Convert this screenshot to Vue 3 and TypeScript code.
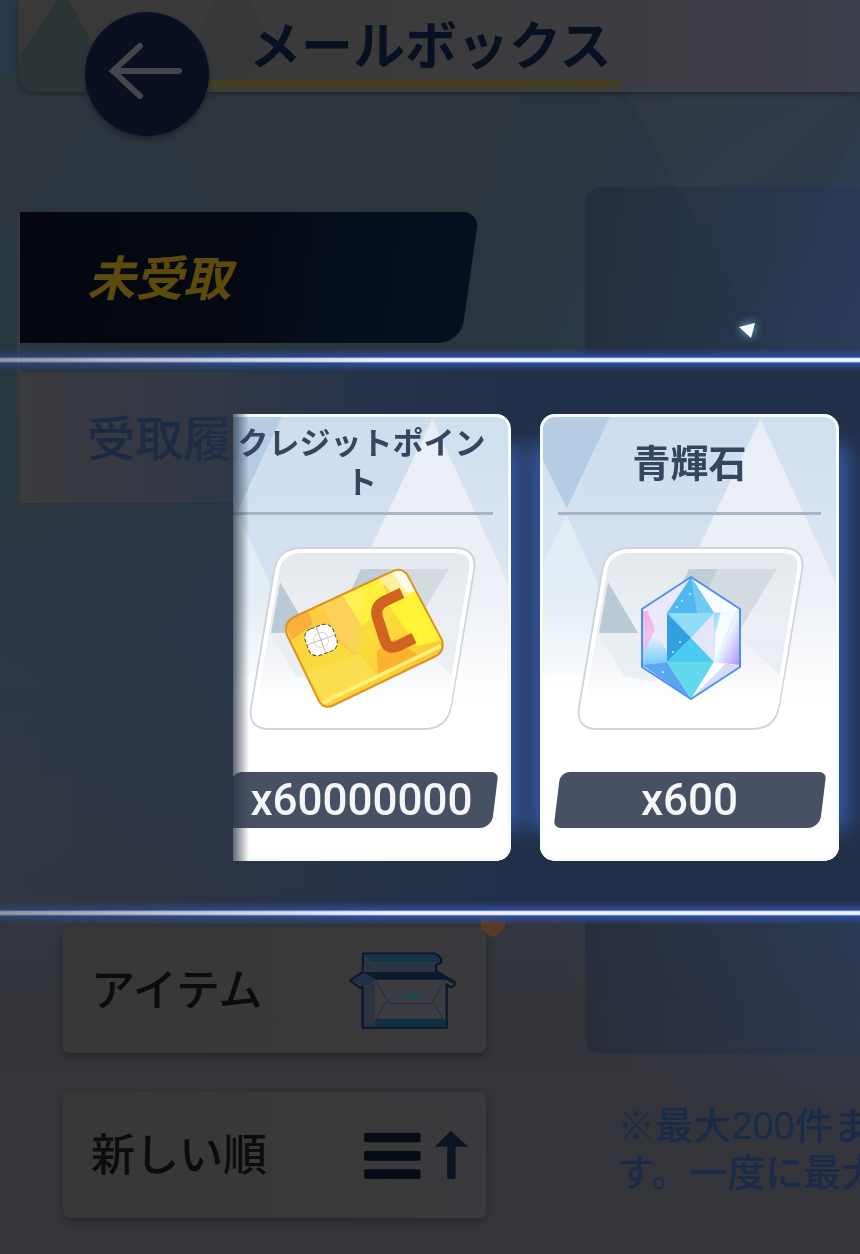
<script setup lang="ts">
import { ref } from 'vue'

interface Reward {
  name: string
  amount: number
  art: 'card' | 'gem'
  long: boolean
}

const tabs = ['未受取', '受取履歴']
const activeTab = ref(0)
const rewards: Reward[] = [
  { name: 'クレジットポイント', amount: 60000000, art: 'card', long: true },
  { name: '青輝石', amount: 600, art: 'gem', long: false },
]
</script>

<template>
  <div class="screen">
    <svg class="backdrop" viewBox="0 0 860 1254" preserveAspectRatio="xMidYMin slice" aria-hidden="true">
      <path d="M0 0H17V77H0Z" fill="#293849" />
      <path d="M88 120L30 212H214L165 130Z" fill="#293640" opacity=".6" />
      <path d="M520 92H625L790 390H430Z" fill="#263746" opacity=".3" />
      <path d="M625 92H860L700 230Z" fill="#3a4650" opacity=".2" />
      <path d="M860 120L740 400L860 620Z" fill="#30456a" opacity=".2" />
      <path d="M0 240L17 210V540L0 500Z" fill="#26373d" opacity=".7" />
    </svg>

    <header class="topbar">
      <svg class="topbar-art" viewBox="0 0 842 92" preserveAspectRatio="xMinYMin slice" aria-hidden="true">
        <path d="M39 0H50L104 92H0V58Z" fill="#2b3536" />
        <path d="M196 0H232L250 40L230 80H160Z" fill="#353839" opacity=".4" />
      </svg>
      <button class="back" type="button" aria-label="戻る">
        <svg viewBox="0 0 124 124" aria-hidden="true">
          <path d="M94 59H28M55 34L28 59L55 84" fill="none" stroke="#45454a" stroke-width="6" stroke-linecap="round" stroke-linejoin="miter" />
        </svg>
      </button>
      <h1 class="title">メールボックス</h1>
    </header>

    <div class="body">
      <aside class="side">
        <nav class="tabs">
          <button
            v-for="(tab, i) in tabs"
            :key="tab"
            type="button"
            class="tab"
            :class="{ active: activeTab === i }"
            @click="activeTab = i"
          >
            <span>{{ tab }}</span>
          </button>
        </nav>
        <div class="filters">
          <button type="button" class="filter">
            <span>アイテム</span>
            <svg class="box-icon" viewBox="40 125 330 240" aria-hidden="true">
              <path d="M86 136H300Q322 145 319 162L304 170V188L360 222Q364 234 346 236L336 228V358H84V236L76 238L46 217L84 192Z" fill="#3b3d42" stroke="#0b192a" stroke-width="7" stroke-linejoin="round" />
              <path d="M90 138H300Q320 150 316 162H112Q98 158 90 138Z" fill="#113447" />
              <path d="M92 150Q100 164 114 165H300V190H92Z" fill="#293543" />
              <path d="M86 192H308L348 216L340 212H120Z" fill="#0b1b2d" />
              <path d="M84 194H306L354 224L334 212H120Z" fill="#0b1b2d" stroke="#0b1b2d" stroke-width="4" />
              <path d="M50 216L88 194L122 211L88 236Z" fill="#213049" />
              <path d="M88 236L120 212V354H88Z" fill="#2c3441" />
              <path d="M122 212L163 286H291L332 212M152 282L120 340M296 280L332 345" fill="none" stroke="#252a38" stroke-width="3" />
              <path d="M193 273Q230 232 268 273Z" fill="#1d464d" />
              <path d="M128 331H334V355H124Q116 343 128 331Z" fill="#102f40" />
            </svg>
            <svg class="badge" viewBox="0 0 26 22" aria-hidden="true">
              <path d="M2 0H24L26 6Q24 14 17 18Q13 22 9 18Q2 14 0 6Z" fill="#593b24" />
            </svg>
          </button>
          <button type="button" class="filter sort">
            <span>新しい順</span>
            <svg class="sort-icon" viewBox="85 668 320 150" aria-hidden="true">
              <g fill="#070b16">
                <rect x="88" y="676" width="169" height="29" rx="5" />
                <rect x="88" y="731" width="169" height="29" rx="5" />
                <rect x="88" y="786" width="169" height="29" rx="5" />
              </g>
              <path d="M348 670L400 718H362V811Q362 815 358 815H341Q337 815 337 811V718H300Z" fill="#0c1623" />
            </svg>
          </button>
        </div>
      </aside>
      <main class="content">
        <div class="panel"></div>
        <p class="notice">※最大200件ま<br />す。一度に最大</p>
      </main>
    </div>

    <div class="overlay">
      <section class="band" aria-label="獲得報酬">
        <div class="beam"></div>
        <div class="viewport">
          <ul class="rewards">
            <li v-for="reward in rewards" :key="reward.name" class="reward">
              <div class="face">
                <svg class="face-art" viewBox="0 0 300 447" aria-hidden="true">
                  <path d="M0 0H71L27 94L0 40Z" fill="#b5cce3" />
                  <path d="M27 101L68 188L80 260H0V156Z" fill="#e4edf4" opacity=".8" />
                  <path d="M71 0H222L130 200H72L27 101Z" fill="#cbdcee" opacity=".5" />
                  <path d="M221 4L118 220L90 300H300V176Z" fill="#f1f3f7" opacity=".75" />
                  <path d="M0 190H300V447H0Z" fill="url(#fade)" />
                  <defs>
                    <linearGradient id="fade" x1="0" y1="0" x2="0" y2="1">
                      <stop offset="0" stop-color="#fff" stop-opacity="0" />
                      <stop offset=".4" stop-color="#fff" />
                    </linearGradient>
                  </defs>
                </svg>
                <h2 class="name" :class="{ long: reward.long }">{{ reward.name }}</h2>
                <svg class="art" viewBox="30 128 240 192" aria-hidden="true">
                  <defs>
                    <linearGradient id="tile" x1="0" y1="0" x2="0" y2="1">
                      <stop offset="0" stop-color="#e3e8ed" />
                      <stop offset=".5" stop-color="#edf0f5" />
                      <stop offset=".85" stop-color="#fff" />
                    </linearGradient>
                    <linearGradient id="gold" x1="0" y1="0" x2="1" y2="1">
                      <stop offset="0" stop-color="#fbc337" />
                      <stop offset=".5" stop-color="#fbdc3c" />
                      <stop offset="1" stop-color="#fcb92b" />
                    </linearGradient>
                    <linearGradient id="pearl" x1="0" y1="0" x2="0" y2="1">
                      <stop offset="0" stop-color="#f3b8e4" />
                      <stop offset=".45" stop-color="#eef0ff" />
                      <stop offset="1" stop-color="#70ccf6" />
                    </linearGradient>
                    <linearGradient id="violet" x1="0" y1="0" x2="1" y2="1">
                      <stop offset="0" stop-color="#8ad8fb" />
                      <stop offset=".5" stop-color="#e8f6ff" />
                      <stop offset="1" stop-color="#b28ef2" />
                    </linearGradient>
                    <clipPath id="goldShape">
                      <path d="M82 203L181 157Q191 153 196 162L230 226Q233 237 224 242L122 291Q112 296 107 287L75 221Q71 209 82 203Z" />
                    </clipPath>
                  </defs>
                  <path d="M90 134H243Q265 134 262 156L239 292Q235 315 212 315H58Q36 315 39 294L62 158Q66 134 90 134Z" fill="url(#tile)" stroke="#d0d4d9" stroke-width="2" />
                  <path d="M68 168L98 219H59Z" fill="#b9cad6" />
                  <path d="M149 155H237L198 219H170Z" fill="#d3dae0" />
                  <path d="M149 155H178L160 190L138 178Z" fill="#bfcdd7" />
                  <path d="M58 220H97L116 268L84 262Z" fill="#e6ebf1" opacity=".7" />
                  <path d="M197 220H247L240 262Z" fill="#e8ebf2" opacity=".7" />
                  <path d="M90 137H243Q262 137 259 156L237 290Q233 312 212 312H58Q39 312 42 294L65 158Q68 137 90 137Z" fill="none" stroke="#fff" stroke-width="4" />

                  <g v-if="reward.art === 'card'">
                    <g clip-path="url(#goldShape)">
                      <path d="M70 150H235V297H70Z" fill="url(#gold)" />
                      <path d="M72 207L96 196L101 210L80 226Z" fill="#f9b03c" />
                      <path d="M112 190L150 172L146 243L100 210Z" fill="#fccb40" />
                      <path d="M130 180L168 162L178 190L150 212Z" fill="#fff03d" />
                      <path d="M165 164L200 148L216 200L188 186Z" fill="#fff09a" />
                      <path d="M180 157L200 150L208 182L192 176Z" fill="#fffbe8" />
                      <path d="M176 190L205 176L232 226L205 232Z" fill="#fff335" />
                      <path d="M151 174L146 242L124 222L110 190Z" fill="#fff" opacity=".12" />
                      <path d="M165 237L182 225L210 244L166 264Z" fill="#fbb32d" />
                      <path d="M95 260L147 240L166 262L114 290Z" fill="#fddd50" />
                      <path d="M110 289L229 232" stroke="#fff07a" stroke-width="4" />
                    </g>
                    <path d="M82 203L181 157Q191 153 196 162L230 226Q233 237 224 242L122 291Q112 296 107 287L75 221Q71 209 82 203Z" fill="none" stroke="#dd9424" stroke-width="2" />
                    <path d="M190 179L173 187Q163 192 165 202L173 227Q176 236 186 232L202 224" fill="none" stroke="#d16322" stroke-width="11" />
                    <g transform="translate(109 226) rotate(-20)">
                      <rect x="-15" y="-14" width="30" height="28" rx="9" fill="#fff" stroke="#555143" stroke-width="1" stroke-dasharray="4 2" />
                      <path d="M-15 0H15M0 -14V14" fill="none" stroke="#b5b5b9" stroke-width="1" />
                      <rect x="-7" y="-7" width="14" height="14" rx="5" fill="none" stroke="#d8d8dc" stroke-width="1" />
                    </g>
                  </g>
                  <g v-else stroke-linejoin="round">
                    <path d="M151 163L200 195V253L151 285L102 253V195Z" fill="#e9f1ff" />
                    <path d="M151 163L102 195L127 199Z" fill="#ece7fb" />
                    <path d="M151 163L200 195L174 199Z" fill="#f8fcff" />
                    <path d="M151 163L127 199H174Z" fill="#4db9ee" />
                    <path d="M151 163L174 199H157Z" fill="#70caf4" />
                    <path d="M102 197L127 199V248L102 251Z" fill="url(#pearl)" />
                    <path d="M106 198H127V238Z" fill="#e9e9fa" />
                    <path d="M102 198L108 197L115 216L102 242Z" fill="#f2a7dc" opacity=".6" />
                    <path d="M174 199L200 196V251L174 248Z" fill="url(#violet)" />
                    <path d="M181 197L196 196L175 246V220Z" fill="#fff" opacity=".85" />
                    <path d="M127 199H174V248H127Z" fill="#8ddcf8" />
                    <path d="M127 199L151 224L127 248Z" fill="#319fe0" />
                    <path d="M127 248L151 224L174 248Z" fill="#4acbf2" />
                    <path d="M174 199L151 224L174 248Z" fill="#e5e5fb" />
                    <path d="M102 251L127 248L151 285Z" fill="#5aa6f0" />
                    <path d="M127 248H174L151 285Z" fill="#62d9ed" />
                    <path d="M174 248L200 252L151 285Z" fill="#d8daf9" />
                    <path d="M174 248L185 250L151 285Z" fill="#fff" />
                    <path d="M151 163L200 195V253L151 285L102 253V195Z" fill="none" stroke="#4e91ed" stroke-width="2" />
                    <g fill="#d5f5ff">
                      <circle cx="142" cy="187" r="1" />
                      <circle cx="150" cy="180" r="1" />
                      <circle cx="137" cy="193" r="1" />
                      <circle cx="140" cy="228" r="1" />
                      <circle cx="133" cy="238" r="1" />
                      <circle cx="123" cy="258" r="1" />
                    </g>
                  </g>
                </svg>
                <p class="amount"><span>x{{ reward.amount }}</span></p>
              </div>
            </li>
          </ul>
        </div>
        <div class="beam"></div>
        <svg class="spark" viewBox="0 0 40 40" aria-hidden="true">
          <path d="M11 17L27 13L23 28Z" fill="#f4ffff" />
        </svg>
      </section>
    </div>
  </div>
</template>

<style>
body {
  margin: 0;
  background: #2d353c;
}
</style>

<style scoped>
.screen {
  position: relative;
  display: flex;
  flex-direction: column;
  min-height: 100vh;
  overflow: hidden;
  font-family: 'Noto Sans CJK JP', 'Noto Sans', sans-serif;
  background:
    radial-gradient(ellipse 45% 50% at 100% 45%, #2f4263 0%, rgba(47, 66, 99, 0) 100%),
    linear-gradient(180deg, #2d353c 0%, #2c363d 35%, #2b3645 50%, #2f3640 68%, #33343a 80%, #35363a 100%);
}

button {
  margin: 0;
  padding: 0;
  border: 0;
  background: none;
  font: inherit;
  text-align: left;
  cursor: pointer;
}

.backdrop {
  position: absolute;
  inset: 0;
  width: 100%;
  height: 100%;
}

.topbar {
  position: relative;
  z-index: 1;
  display: flex;
  flex: none;
  align-items: flex-start;
  height: 92px;
  margin-left: 18px;
  border-bottom-left-radius: 18px;
  background: linear-gradient(90deg, #393939 0%, #3b3b3b 45%, #3e3c43 75%, #3c404a 100%);
  box-shadow: 0 2px 4px #1d262e;
}

.topbar-art {
  position: absolute;
  inset: 0;
  width: 100%;
  height: 100%;
  border-bottom-left-radius: 18px;
}

.back {
  position: relative;
  z-index: 1;
  flex: none;
  width: 124px;
  height: 124px;
  margin: 12px 0 0 67px;
  border-radius: 50%;
  background: #0a101f;
  box-shadow: 0 3px 5px #1c242c;
}

.back svg {
  display: block;
}

.title {
  position: relative;
  box-sizing: border-box;
  height: 88px;
  margin: 0 0 0 -10px;
  padding: 6px 8px 0 50px;
  border-bottom: 8px solid #443f20;
  color: #081122;
  font-size: 52px;
  font-weight: 700;
  line-height: 74px;
  white-space: nowrap;
}

.body {
  position: relative;
  display: grid;
  flex: 1;
  grid-template-columns: 585px minmax(0, 1fr);
}

.side {
  display: flex;
  flex-direction: column;
  justify-content: space-between;
  padding: 120px 0 36px;
}

.tabs {
  display: flex;
  flex-direction: column;
  gap: 29px;
  width: 459px;
  margin-left: 17px;
  padding-bottom: 36px;
  border-left: 3px solid;
  border-image: linear-gradient(180deg, #343b3e 0%, #3a3a3d 60%, rgba(58, 58, 61, 0) 100%) 1;
}

.tab {
  position: relative;
  height: 131px;
  padding: 0 0 6px 67px;
  color: #1b2a43;
  font-size: 48px;
  font-weight: 500;
  background: linear-gradient(90deg, #3b3b3f 0%, #353a44 50%, #2f3a50 100%);
  box-shadow: 0 1px 2px #273341;
}

.tab span {
  position: relative;
}

.tab.active {
  overflow: hidden;
  color: #5c4b0d;
  font-style: italic;
  font-weight: 700;
  background: none;
  box-shadow: none;
}

.tab.active::before {
  content: '';
  position: absolute;
  inset: 0 9px 0 -20px;
  border-radius: 0 16px 22px 0;
  background: linear-gradient(90deg, #04070f 0%, #040912 50%, #05101d 75%, #06111f 100%);
  transform: skewX(-8deg);
}

.filters {
  display: flex;
  flex-direction: column;
  gap: 39px;
  width: 423px;
  margin-left: 63px;
}

.filter {
  position: relative;
  display: flex;
  align-items: center;
  justify-content: space-between;
  height: 126px;
  padding: 0 28px;
  border-radius: 7px;
  background: linear-gradient(90deg, #383838 0%, #393939 60%, #3a3a3e 100%);
  box-shadow: 0 4px 6px #27292d;
  color: #0b0c0e;
  font-size: 44px;
  font-weight: 500;
}

.filter span {
  padding-bottom: 6px;
}

.filter.sort {
  padding-right: 16px;
}

.box-icon {
  width: 110px;
  height: 80px;
}

.sort-icon {
  width: 107px;
  height: 50px;
}

.badge {
  position: absolute;
  top: -10px;
  right: -20px;
  width: 26px;
  height: 22px;
}

.content {
  padding-top: 95px;
}

.panel {
  height: 867px;
  border-radius: 16px 0 0 16px;
  background: linear-gradient(90deg, rgba(31, 40, 56, 0.55), rgba(38, 54, 88, 0.45));
}

.notice {
  margin: 49px 0 0;
  padding-left: 32px;
  color: #192b49;
  font-family: 'Liberation Sans', 'Noto Sans CJK JP', sans-serif;
  font-size: 38px;
  font-weight: 500;
  line-height: 47px;
  white-space: nowrap;
}

.overlay {
  position: absolute;
  inset: 0;
  z-index: 2;
  display: flex;
  flex-direction: column;
  justify-content: center;
  padding-top: 19px;
}

.band {
  position: relative;
}

.band::before {
  content: '';
  position: absolute;
  inset: 12px 0;
  background:
    linear-gradient(90deg, rgba(38, 48, 66, 0) 0%, rgba(36, 49, 74, 0.3) 30%, rgba(33, 46, 71, 0.9) 60%, rgba(33, 46, 71, 0.9) 100%),
    linear-gradient(90deg, rgba(45, 54, 66, 0) 0%, rgba(43, 54, 72, 0) 20%, #29364d 55%);
}

.beam {
  position: relative;
  height: 24px;
  background: linear-gradient(180deg, rgba(45, 71, 148, 0) 0%, #2e4a98 38%, #c8d4f8 42%, #fff 50%, #c8d4f8 58%, #2c509c 62%, rgba(40, 72, 140, 0) 100%);
  mask-image: linear-gradient(90deg, rgba(0, 0, 0, 0.5) 0%, rgba(0, 0, 0, 0.7) 15%, #000 45%);
}

.viewport {
  position: relative;
  margin-left: 233px;
  padding: 42px 0 40px;
  overflow: hidden;
  mask-image: linear-gradient(90deg, rgba(0, 0, 0, 0.25) 0, #000 16px);
}

.rewards {
  display: flex;
  gap: 29px;
  margin: 0 0 0 -21px;
  padding: 0;
  list-style: none;
}

.reward {
  position: relative;
  flex: none;
  width: 299px;
}

.reward::before {
  content: '';
  position: absolute;
  inset: 30px -10px;
  border-radius: 8px;
  background: #34579f;
  filter: blur(10px);
}

.face {
  position: relative;
  display: flex;
  flex-direction: column;
  align-items: center;
  box-sizing: border-box;
  height: 447px;
  overflow: hidden;
  border-radius: 15px;
  background: linear-gradient(180deg, #cfdfee 0%, #dbe6f2 35%, #fff 65%);
}

.face::after {
  content: '';
  position: absolute;
  inset: 0;
  border: 3px solid #f8fbfe;
  border-radius: 15px;
}

.face-art {
  position: absolute;
  inset: 0;
  width: 100%;
  height: 100%;
}

.name {
  position: relative;
  display: flex;
  align-items: center;
  justify-content: center;
  box-sizing: border-box;
  width: 263px;
  height: 101px;
  margin: 0;
  padding-bottom: 6px;
  border-bottom: 3px solid #a9b4c5;
  color: #35465f;
  font-size: 38px;
  font-weight: 700;
  line-height: 39px;
  text-align: center;
}

.name.long {
  font-size: 31px;
}

.art {
  position: relative;
  flex: none;
  width: 240px;
  height: 192px;
  margin-top: 27px;
}

.amount {
  position: relative;
  width: 266px;
  height: 56px;
  margin: 38px 0 0;
  color: #f5f6f8;
  font-family: Roboto, 'Liberation Sans', sans-serif;
  font-size: 44px;
  font-weight: 500;
  line-height: 56px;
  text-align: center;
}

.amount::before {
  content: '';
  position: absolute;
  inset: 0;
  border-radius: 9px 7px 12px 7px;
  background: #475164;
  transform: skewX(-7deg);
}

.amount span {
  position: relative;
}

.spark {
  position: absolute;
  top: -38px;
  left: 87%;
  width: 40px;
  height: 40px;
  margin-left: -20px;
  filter: drop-shadow(0 0 5px #7fd0e8);
}
</style>
